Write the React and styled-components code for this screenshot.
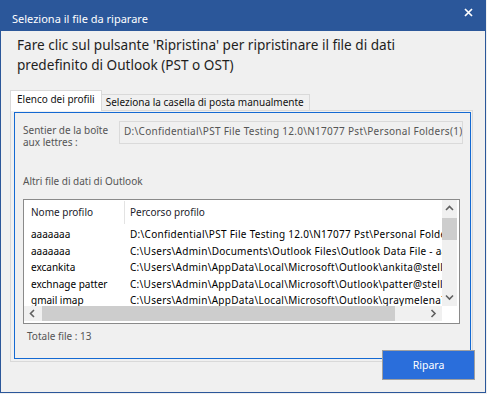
import React from 'react';
import styled, { createGlobalStyle, css } from 'styled-components';

const GlobalStyle = createGlobalStyle`
  html, body {
    margin: 0;
    padding: 0;
    background: #f0f0f0;
  }
  body {
    font-family: "Noto Sans", "Open Sans", sans-serif;
  }
`;

const Window = styled.div`
  width: 486px;
  height: 393px;
  box-sizing: border-box;
  border: 1px solid #2b579a;
  background: #f0f0f0;
  display: flex;
  flex-direction: column;
`;

const TitleBar = styled.div`
  height: 30px;
  flex: none;
  background: #2b579a;
  color: #fff;
  display: flex;
  justify-content: space-between;
  align-items: flex-start;
  padding: 0 12px 0 11px;
`;

const Title = styled.span`
  font-size: 11px;
  line-height: 14px;
  margin-top: 11px;
`;

const CloseBtn = styled.span`
  display: flex;
  margin-top: 7px;
`;

const Heading = styled.div`
  margin: 4px 30px 0 16px;
  font-size: 13.6px;
  line-height: 20px;
  color: #1e1e1e;
`;

const TabsRow = styled.div`
  display: flex;
  align-items: flex-end;
  margin: 15px 0 0 9px;
`;

const Tab = styled.div`
  box-sizing: border-box;
  font-size: 10px;
  line-height: 12px;
  color: #111;
  border: 1px solid #d9d9d9;
  border-bottom: none;
  white-space: nowrap;
  ${p => p.$active ? css`
    height: 21px;
    padding: 2px 6px 0;
    background: #fff;
    margin-bottom: -1px;
    position: relative;
    z-index: 1;
  ` : css`
    height: 16px;
    padding: 1px 5px 0 4px;
    background: #f0f0f0;
    border-left: none;
  `}
`;

const Frame = styled.div`
  margin-left: 9px;
  width: 463px;
  height: 252px;
  box-sizing: border-box;
  border: 1px solid #d9d9d9;
  padding: 1px 1px 2px 3px;
  display: flex;
`;

const Panel = styled.div`
  flex: 1;
  min-width: 0;
  border: 1px solid #1469d2;
  display: flex;
  flex-direction: column;
`;

const FieldRow = styled.div`
  display: flex;
  min-width: 0;
  margin: 8px 7px 0 8px;
`;

const Label = styled.div`
  width: 96px;
  flex: none;
  padding-top: 3px;
  font-size: 10px;
  line-height: 12px;
  color: #555;
`;

const PathBox = styled.div`
  flex: 1;
  width: 0;
  min-width: 0;
  height: 23px;
  box-sizing: border-box;
  border: 1px solid #dadada;
  padding: 1px 4px 0;
  font-size: 10px;
  line-height: 16px;
  letter-spacing: 0.28px;
  color: #555;
  white-space: nowrap;
  overflow: hidden;
`;

const Caption = styled.div`
  margin: ${p => p.$top}px 0 0 ${p => p.$left}px;
  font-size: 10px;
  line-height: 14px;
  color: #555;
`;

const ListBox = styled.div`
  margin: 11px 0 0 8px;
  width: 437px;
  height: 125px;
  box-sizing: border-box;
  border: 1px solid #8a8a8a;
  background: #fff;
  display: grid;
  grid-template-columns: 1fr 17px;
  grid-template-rows: 1fr 17px;
`;

const ListContent = styled.div`
  min-width: 0;
  overflow: hidden;
`;

const HeaderRow = styled.div`
  display: flex;
  height: 26px;
  align-items: flex-start;
`;

const HeadCell = styled.div`
  box-sizing: border-box;
  height: 23px;
  margin-top: 1px;
  padding: 5px 0 0 ${p => (p.$first ? 7 : 5)}px;
  width: ${p => (p.$first ? '101px' : 'auto')};
  border-right: ${p => (p.$first ? '1px solid #e3e3e3' : 'none')};
  font-size: 10px;
  line-height: 12px;
  color: #1b1b2b;
  white-space: nowrap;
`;

const Row = styled.div`
  display: flex;
  height: 16.5px;
  line-height: 16.5px;
  font-size: 10px;
  color: #000;
  white-space: nowrap;
`;

const Cell = styled.div`
  box-sizing: border-box;
  flex: none;
  width: ${p => (p.$first ? '101px' : 'auto')};
  padding-left: ${p => (p.$first ? 7 : 5)}px;
  letter-spacing: ${p => (p.$first ? 'normal' : '0.28px')};
`;

const VScroll = styled.div`
  grid-column: 2;
  grid-row: 1;
  margin-right: 2px;
  background: #f0f0f0;
  display: flex;
  flex-direction: column;
`;

const HScroll = styled.div`
  grid-column: 1;
  grid-row: 2;
  margin-bottom: 2px;
  background: #f0f0f0;
  display: flex;
`;

const Arrow = styled.div`
  flex: none;
  width: ${p => (p.$horiz ? '17px' : 'auto')};
  height: ${p => (p.$horiz ? 'auto' : '17px')};
  display: flex;
  align-items: center;
  justify-content: center;
`;

const Thumb = styled.div`
  flex: none;
  background: #cdcdcd;
  ${p => p.$horiz ? css`
    width: 353px;
    margin-left: 1px;
  ` : css`
    height: 22px;
    margin-top: 1px;
  `}
`;

const Spacer = styled.div`
  flex: 1;
`;

const Footer = styled.div`
  display: flex;
  justify-content: flex-end;
  margin-top: -12px;
  padding-right: 10px;
`;

const Button = styled.button`
  width: 93px;
  height: 30px;
  box-sizing: border-box;
  border: 1px solid #a0a0a0;
  background: #2a6edb;
  color: #fff;
  font-family: "Noto Sans", "Open Sans", sans-serif;
  font-size: 10.5px;
  padding: 0;
  cursor: pointer;
`;

const Chevron = ({ dir }) => {
  const pts = {
    up: '1,5 4.5,1.5 8,5',
    down: '1,1.5 4.5,5 8,1.5',
    left: '5,1 1.5,4.5 5,8',
    right: '1.5,1 5,4.5 1.5,8',
  }[dir];
  const vert = dir === 'up' || dir === 'down';
  return (
    <svg width={vert ? 9 : 7} height={vert ? 7 : 9} viewBox={vert ? '0 0 9 7' : '0 0 7 9'}>
      <polyline points={pts} fill="none" stroke="#606060" strokeWidth="1.6" />
    </svg>
  );
};

const profiles = [
  ['aaaaaaa', 'D:\\Confidential\\PST File Testing 12.0\\N17077 Pst\\Personal Folders(1).pst'],
  ['aaaaaaa', 'C:\\Users\\Admin\\Documents\\Outlook Files\\Outlook Data File - aaaaaaa.pst'],
  ['excankita', 'C:\\Users\\Admin\\AppData\\Local\\Microsoft\\Outlook\\ankita@stellarinfo.com.ost'],
  ['exchnage patter', 'C:\\Users\\Admin\\AppData\\Local\\Microsoft\\Outlook\\patter@stellarinfo.com.ost'],
  ['gmail imap', 'C:\\Users\\Admin\\AppData\\Local\\Microsoft\\Outlook\\graymelena73@gmail.com.ost'],
  ['hotmail', 'C:\\Users\\Admin\\AppData\\Local\\Microsoft\\Outlook\\hotmail.ost'],
];

export default function App() {
  return (
    <>
      <GlobalStyle />
      <Window>
        <TitleBar>
          <Title>Seleziona il file da riparare</Title>
          <CloseBtn>
            <svg width="9" height="9" viewBox="0 0 9 9">
              <path d="M1 1 L8 8 M8 1 L1 8" stroke="#fff" strokeWidth="1.7" />
            </svg>
          </CloseBtn>
        </TitleBar>

        <Heading>
          Fare clic sul pulsante 'Ripristina' per ripristinare il file di dati predefinito di Outlook (PST o OST)
        </Heading>

        <TabsRow>
          <Tab $active>Elenco dei profili</Tab>
          <Tab>Seleziona la casella di posta manualmente</Tab>
        </TabsRow>

        <Frame>
          <Panel>
            <FieldRow>
              <Label>Sentier de la boîte<br />aux lettres :</Label>
              <PathBox>{'D:\\Confidential\\PST File Testing 12.0\\N17077 Pst\\Personal Folders(1).pst'}</PathBox>
            </FieldRow>

            <Caption $top={26} $left={8}>Altri file di dati di Outlook</Caption>

            <ListBox>
              <ListContent>
                <HeaderRow>
                  <HeadCell $first>Nome profilo</HeadCell>
                  <HeadCell>Percorso profilo</HeadCell>
                </HeaderRow>
                {profiles.map(([name, path], i) => (
                  <Row key={i}>
                    <Cell $first>{name}</Cell>
                    <Cell>{path}</Cell>
                  </Row>
                ))}
              </ListContent>
              <VScroll>
                <Arrow><Chevron dir="up" /></Arrow>
                <Thumb />
                <Spacer />
                <Arrow><Chevron dir="down" /></Arrow>
              </VScroll>
              <HScroll>
                <Arrow $horiz><Chevron dir="left" /></Arrow>
                <Thumb $horiz />
                <Spacer />
                <Arrow $horiz><Chevron dir="right" /></Arrow>
              </HScroll>
            </ListBox>

            <Caption $top={5} $left={12}>Totale file : 13</Caption>
          </Panel>
        </Frame>

        <Footer>
          <Button>Ripara</Button>
        </Footer>
      </Window>
    </>
  );
}
